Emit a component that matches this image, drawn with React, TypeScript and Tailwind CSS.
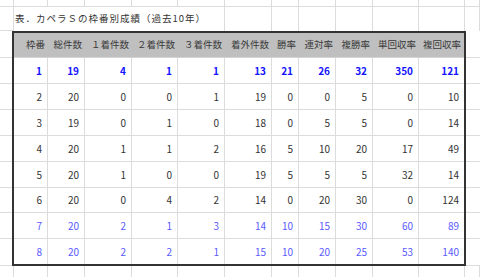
import React from "react";

const COLS = [34, 37, 47, 46, 47, 47, 27, 37, 37, 46, 45];
const HEAD = ["枠番", "総件数", "１着件数", "２着件数", "３着件数", "着外件数", "勝率", "連対率", "複勝率", "単回収率", "複回収率"];
const ROWS: number[][] = [
  [1, 19, 4, 1, 1, 13, 21, 26, 32, 350, 121],
  [2, 20, 0, 0, 1, 19, 0, 0, 5, 0, 10],
  [3, 19, 0, 1, 0, 18, 0, 5, 5, 0, 14],
  [4, 20, 1, 1, 2, 16, 5, 10, 20, 17, 49],
  [5, 20, 1, 0, 0, 19, 5, 5, 5, 32, 14],
  [6, 20, 0, 4, 2, 14, 0, 20, 30, 0, 124],
  [7, 20, 2, 1, 3, 14, 10, 15, 30, 60, 89],
  [8, 20, 2, 2, 1, 15, 10, 20, 25, 53, 140],
];
const ROW_H = [26, 26, 26, 26, 26, 25, 26, 25];
const OUTER = [14, 34, 37, 47, 46, 47, 47, 27, 37, 37, 46, 46, 15];

function rowColor(i: number) {
  if (i === 0) return "text-[#1414ff] font-bold";
  if (i >= 6) return "text-[#5a5aff]";
  return "text-[#333333]";
}

export default function App() {
  return (
    <div className="w-[480px] h-[277px] bg-white overflow-hidden font-['Noto_Sans_CJK_JP',sans-serif] text-[#333333]">
      {/* top row */}
      <div className="flex h-[7px] border-b border-[#dcdcdc]">
        {OUTER.map((w, i) => (
          <div key={i} style={{ width: w }} className="h-full shrink-0 border-r border-[#dcdcdc]" />
        ))}
      </div>
      {/* title row */}
      <div className="flex h-[24px]">
        <div className="w-[14px] shrink-0 border-r border-b border-[#dcdcdc]" />
        <div className="w-[211px] shrink-0 border-r border-[#dcdcdc] flex items-center pl-[1px] text-[9.5px] tracking-[1px] leading-none whitespace-nowrap text-[#333333]">
          表．カペラＳの枠番別成績（過去10年）
        </div>
        {[47, 27, 37, 37, 46, 46, 15].map((w, i) => (
          <div key={i} style={{ width: w }} className="shrink-0 border-r border-[#dcdcdc]" />
        ))}
      </div>
      {/* middle */}
      <div className="flex">
        <div className="w-[12px] shrink-0 flex flex-col">
          <div className="h-[27px] border-b border-[#dcdcdc]" />
          {ROW_H.map((h, i) => (
            <div key={i} style={{ height: i === 7 ? h + 2 : h }} className="border-b border-[#dcdcdc]" />
          ))}
        </div>
        <div className="w-[454px] shrink-0 border-2 border-[#333333] flex flex-col">
          <div className="flex h-[25px] bg-[#bfbfbf] border-b border-[#d4d4d4]">
            {HEAD.map((t, i) => (
              <div
                key={i}
                style={{ width: COLS[i] }}
                className="shrink-0 flex items-center justify-end pr-[3px] text-[9.5px] leading-none whitespace-nowrap text-[#3a3a3a]"
              >
                {t}
              </div>
            ))}
          </div>
          {ROWS.map((r, ri) => (
            <div
              key={ri}
              style={{ height: ROW_H[ri] }}
              className={`flex ${ri < 7 ? "border-b border-[#dcdcdc]" : ""}`}
            >
              {r.map((v, ci) => (
                <div
                  key={ci}
                  style={{ width: COLS[ci] }}
                  className={`shrink-0 flex items-center justify-end pr-[5px] text-[10px] leading-none ${
                    ci < 10 ? "border-r border-[#dcdcdc]" : ""
                  } ${rowColor(ri)}`}
                >
                  {v}
                </div>
              ))}
            </div>
          ))}
        </div>
        <div className="w-[14px] shrink-0 flex flex-col">
          <div className="h-[27px] border-b border-[#dcdcdc]" />
          {ROW_H.map((h, i) => (
            <div key={i} style={{ height: i === 7 ? h + 2 : h }} className="border-b border-[#dcdcdc]" />
          ))}
        </div>
      </div>
      {/* bottom row */}
      <div className="flex h-[12px]">
        {OUTER.map((w, i) => (
          <div key={i} style={{ width: w }} className="h-full shrink-0 border-r border-[#dcdcdc]" />
        ))}
      </div>
    </div>
  );
}
